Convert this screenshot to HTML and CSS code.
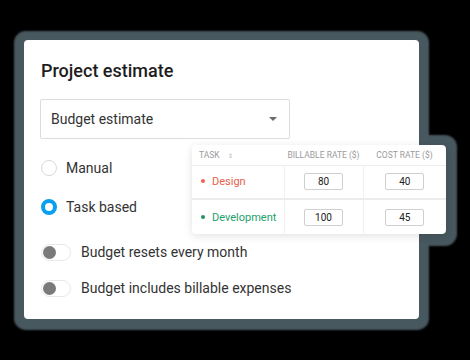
FILE: index.html
```html
<!DOCTYPE html>
<html lang="en">
<head>
  <meta charset="UTF-8">
  <meta name="viewport" content="width=device-width, initial-scale=1.0">
  <title>Project estimate</title>
  <link rel="stylesheet" href="styles.css">
</head>
<body>
<div class="stage">
  <section class="estimate">
    <h1>Project estimate</h1>

    <div class="select">
      <span>Budget estimate</span>
      <span class="caret"></span>
    </div>

    <div class="choice">
      <span class="radio"></span>
      <span>Manual</span>
    </div>
    <div class="choice">
      <span class="radio radio-on"></span>
      <span>Task based</span>
    </div>

    <div class="switch switch-first">
      <span class="track"><span class="knob"></span></span>
      <span>Budget resets every month</span>
    </div>
    <div class="switch">
      <span class="track"><span class="knob"></span></span>
      <span>Budget includes billable expenses</span>
    </div>
  </section>

  <!-- floating rates table, overlaps the card -->
  <div class="rates">
    <table>
      <thead>
      <tr>
        <th class="col-task">Task <span class="sort">&#8661;</span></th>
        <th>Billable rate ($)</th>
        <th>Cost rate ($)</th>
      </tr>
      </thead>
      <tbody>
      <tr>
        <td class="col-task task-design"><span class="bullet"></span>Design</td>
        <td><span class="rate">80</span></td>
        <td><span class="rate">40</span></td>
      </tr>
      <tr>
        <td class="col-task task-dev"><span class="bullet"></span>Development</td>
        <td><span class="rate">100</span></td>
        <td><span class="rate">45</span></td>
      </tr>
      </tbody>
    </table>
  </div>
</div>
</body>
</html>
```

FILE: styles.css
```css
:root {
  --halo: #48585f;
  --text-color: #2b2b2b;
  --blue: #0a9ff0;
  --line: #e6e6e6;
}

* {
  box-sizing: border-box;
  margin: 0;
  padding: 0;
}

body {
  background-color: #000;
  font-family: 'Roboto', 'Liberation Sans', sans-serif;
  color: var(--text-color);
  width: 470px;
  height: 360px;
  overflow: hidden;
}

.stage {
  position: relative;
  padding: 40px 0 0 24px;
}

.estimate {
  width: 395px;
  height: 279px;
  background-color: #fff;
  border-radius: 4px;
  padding: 19px 0 0 17px;
  box-shadow: 0 1px 2px 10px var(--halo);
}

h1 {
  font-size: 18px;
  line-height: 24px;
  font-weight: 500;
  color: #1d1d1d;
}

.select {
  margin-top: 16px;
  width: 250px;
  height: 40px;
  margin-left: -1px;
  border: 1px solid #dcdcdc;
  border-radius: 2px;
  display: flex;
  align-items: center;
  justify-content: space-between;
  padding: 0 12px 0 10px;
  font-size: 14px;
  color: #333;
}

.caret {
  width: 0;
  height: 0;
  border-left: 4px solid transparent;
  border-right: 4px solid transparent;
  border-top: 4px solid #6b6b6b;
}

.choice {
  display: flex;
  align-items: center;
  gap: 9px;
  height: 24px;
  margin-top: 17px;
  font-size: 14px;
  color: #333;
}

.choice + .choice {
  margin-top: 15px;
}

.radio {
  width: 16px;
  height: 16px;
  border-radius: 50%;
  border: 1px solid #d9d9d9;
}

.radio-on {
  border: 4.5px solid var(--blue);
}

.switch {
  display: flex;
  align-items: center;
  gap: 10px;
  height: 24px;
  margin-top: 12px;
  font-size: 14px;
  color: #333;
}

.switch-first {
  margin-top: 21px;
}

.track {
  width: 30px;
  height: 17px;
  border-radius: 9px;
  border: 1px solid #e8e8e8;
  display: flex;
  align-items: center;
  padding-left: 1px;
}

.knob {
  width: 13px;
  height: 13px;
  border-radius: 50%;
  background-color: #7a7a7a;
}

.rates {
  position: absolute;
  left: 192px;
  top: 145px;
  width: 254px;
  background-color: #fff;
  border-radius: 4px;
  box-shadow: 0 2px 8px rgba(0, 0, 0, 0.12);
}

/* dark halo belongs behind the main card too */
.rates::before {
  content: "";
  position: absolute;
  inset: 0;
  z-index: -1;
  border-radius: 4px;
  box-shadow: 0 1px 2px 11px var(--halo);
}

table {
  width: 100%;
  border-collapse: collapse;
  table-layout: fixed;
}

th {
  height: 20px;
  font-size: 8.5px;
  font-weight: 400;
  text-transform: uppercase;
  color: #9a9a9a;
  text-align: center;
  border-bottom: 1px solid #ececec;
  white-space: nowrap;
}

th:nth-child(1), td:nth-child(1) { width: 92px; }
th:nth-child(2), td:nth-child(2) { width: 79px; }

.col-task {
  text-align: left;
  padding-left: 7px;
}

.sort {
  font-size: 6px;
  margin-left: 6px;
  color: #b5b5b5;
}

td {
  height: 35px;
  text-align: center;
  font-size: 11px;
}

td + td {
  border-left: 1px solid #f1f1f1;
}

tbody tr:first-child td {
  height: 34px;
  border-bottom: 2px solid #ececec;
}

td.col-task {
  padding-left: 9px;
}

.bullet {
  display: inline-block;
  width: 4px;
  height: 4px;
  border-radius: 50%;
  margin-right: 7px;
  vertical-align: middle;
  position: relative;
  top: -1px;
}

.task-design { color: #e5604c; }
.task-design .bullet { background-color: #ef6350; }
.task-dev { color: #24a06b; }
.task-dev .bullet { background-color: #1e9461; }

.rate {
  display: inline-block;
  width: 39px;
  height: 17px;
  line-height: 15px;
  border: 1px solid #cfcfcf;
  border-radius: 2px;
  font-size: 10px;
  color: #222;
}
```
